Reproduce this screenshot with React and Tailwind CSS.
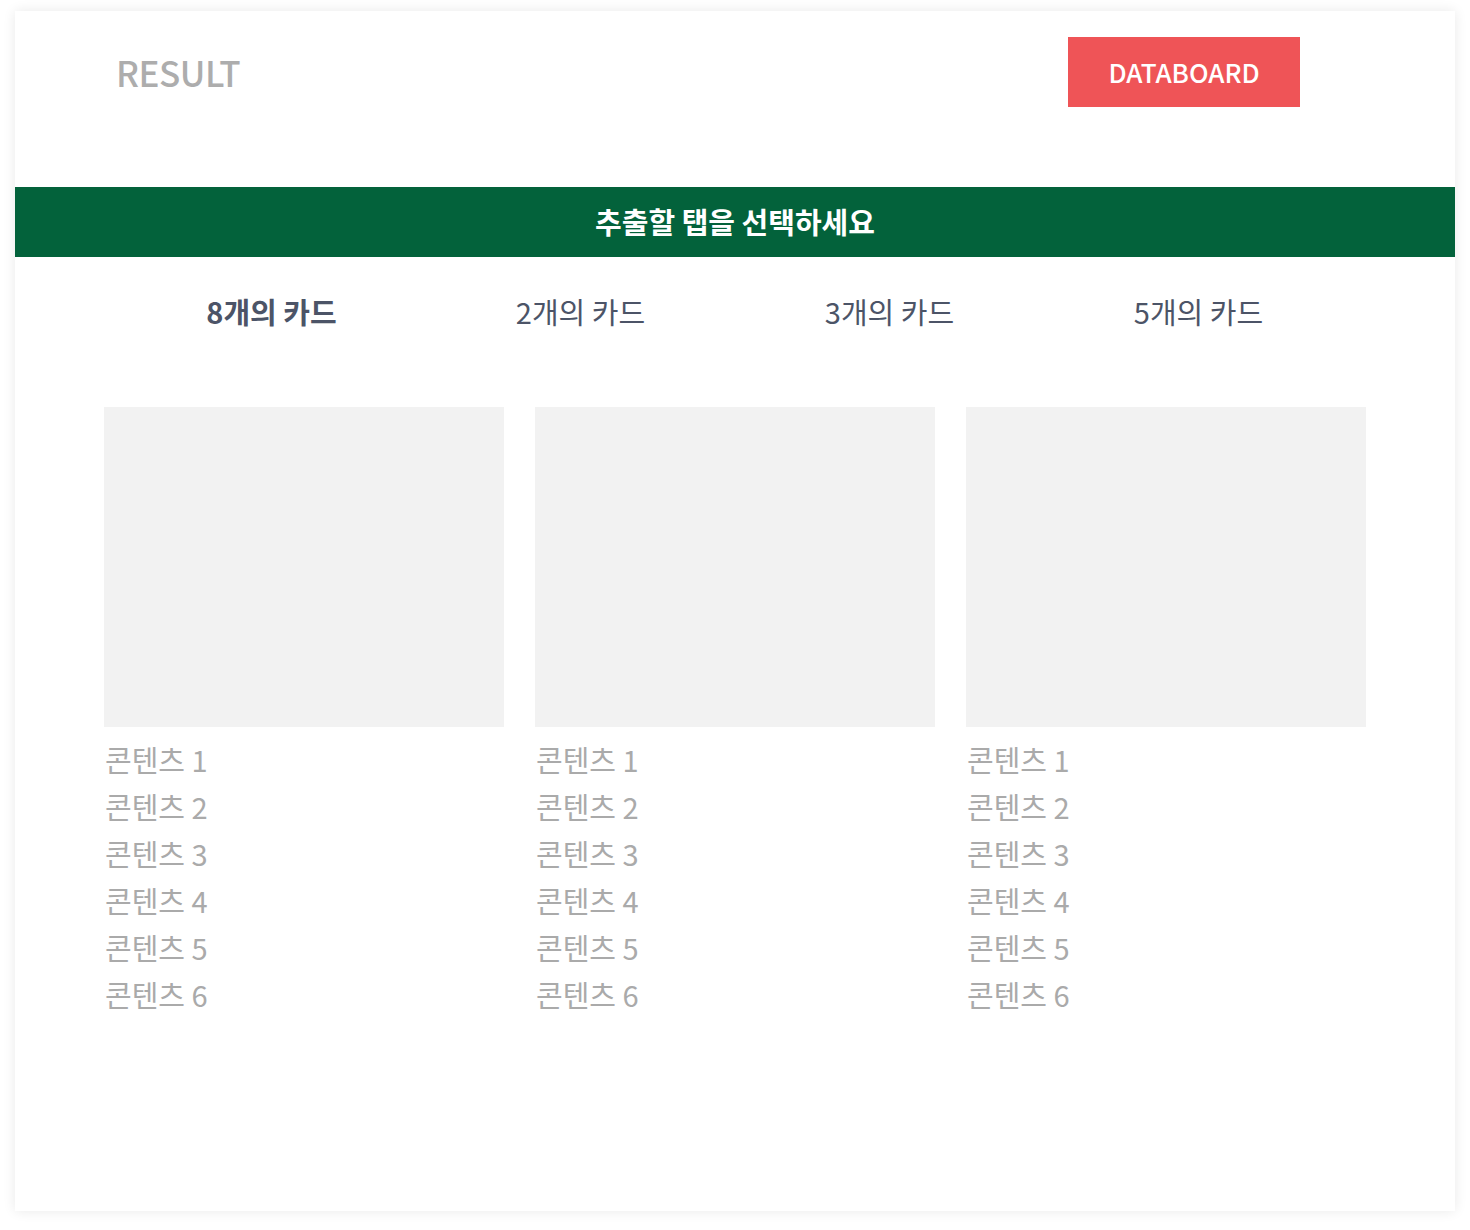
import React from "react";

const font = { fontFamily: '"Noto Sans CJK KR", "Noto Sans", sans-serif' };

export default function App() {
  const tabs = ["8개의 카드", "2개의 카드", "3개의 카드", "5개의 카드"];
  const cards = [0, 1, 2];
  const items = [1, 2, 3, 4, 5, 6];
  return (
    <div className="bg-white pt-[11px] pl-[15px] pb-[19px]" style={font}>
      <div className="w-[1440px] h-[1200px] bg-white shadow-[0_0_12px_rgba(0,0,0,0.09)] flex flex-col">
        <div className="flex items-center justify-between pl-[101px] pr-[155px] pt-[26px] mb-[80px]">
          <div className="text-[35px] font-medium text-[#adadad] leading-none tracking-[-0.5px] -mt-[2px]">RESULT</div>
          <div className="w-[232px] h-[70px] bg-[#ef5457] text-white flex items-center justify-center text-[26px] font-medium leading-none">
            DATABOARD
          </div>
        </div>
        <div className="h-[70px] bg-[#03623b] flex items-center justify-center text-white text-[29px] font-bold leading-none pb-[2px]">
          추출할 탭을 선택하세요
        </div>
        <div className="grid grid-cols-4 px-[102px] h-[108px] items-center">
          {tabs.map((t, i) => (
            <div
              key={t}
              className={
                "text-center text-[29px] leading-none text-[#4c5467] " + (i === 0 ? "font-bold" : "font-normal")
              }
            >
              {t}
            </div>
          ))}
        </div>
        <div className="flex justify-center gap-[31px] mt-[42px]">
          {cards.map((c) => (
            <div key={c} className="w-[400px]">
              <div className="h-[320px] bg-[#f2f2f2]" />
              <div className="pt-[9px] pl-[1px]">
                {items.map((n) => (
                  <div key={n} className="text-[29px] leading-[47px] text-[#aaaaaa]">
                    콘텐츠 {n}
                  </div>
                ))}
              </div>
            </div>
          ))}
        </div>
      </div>
    </div>
  );
}
